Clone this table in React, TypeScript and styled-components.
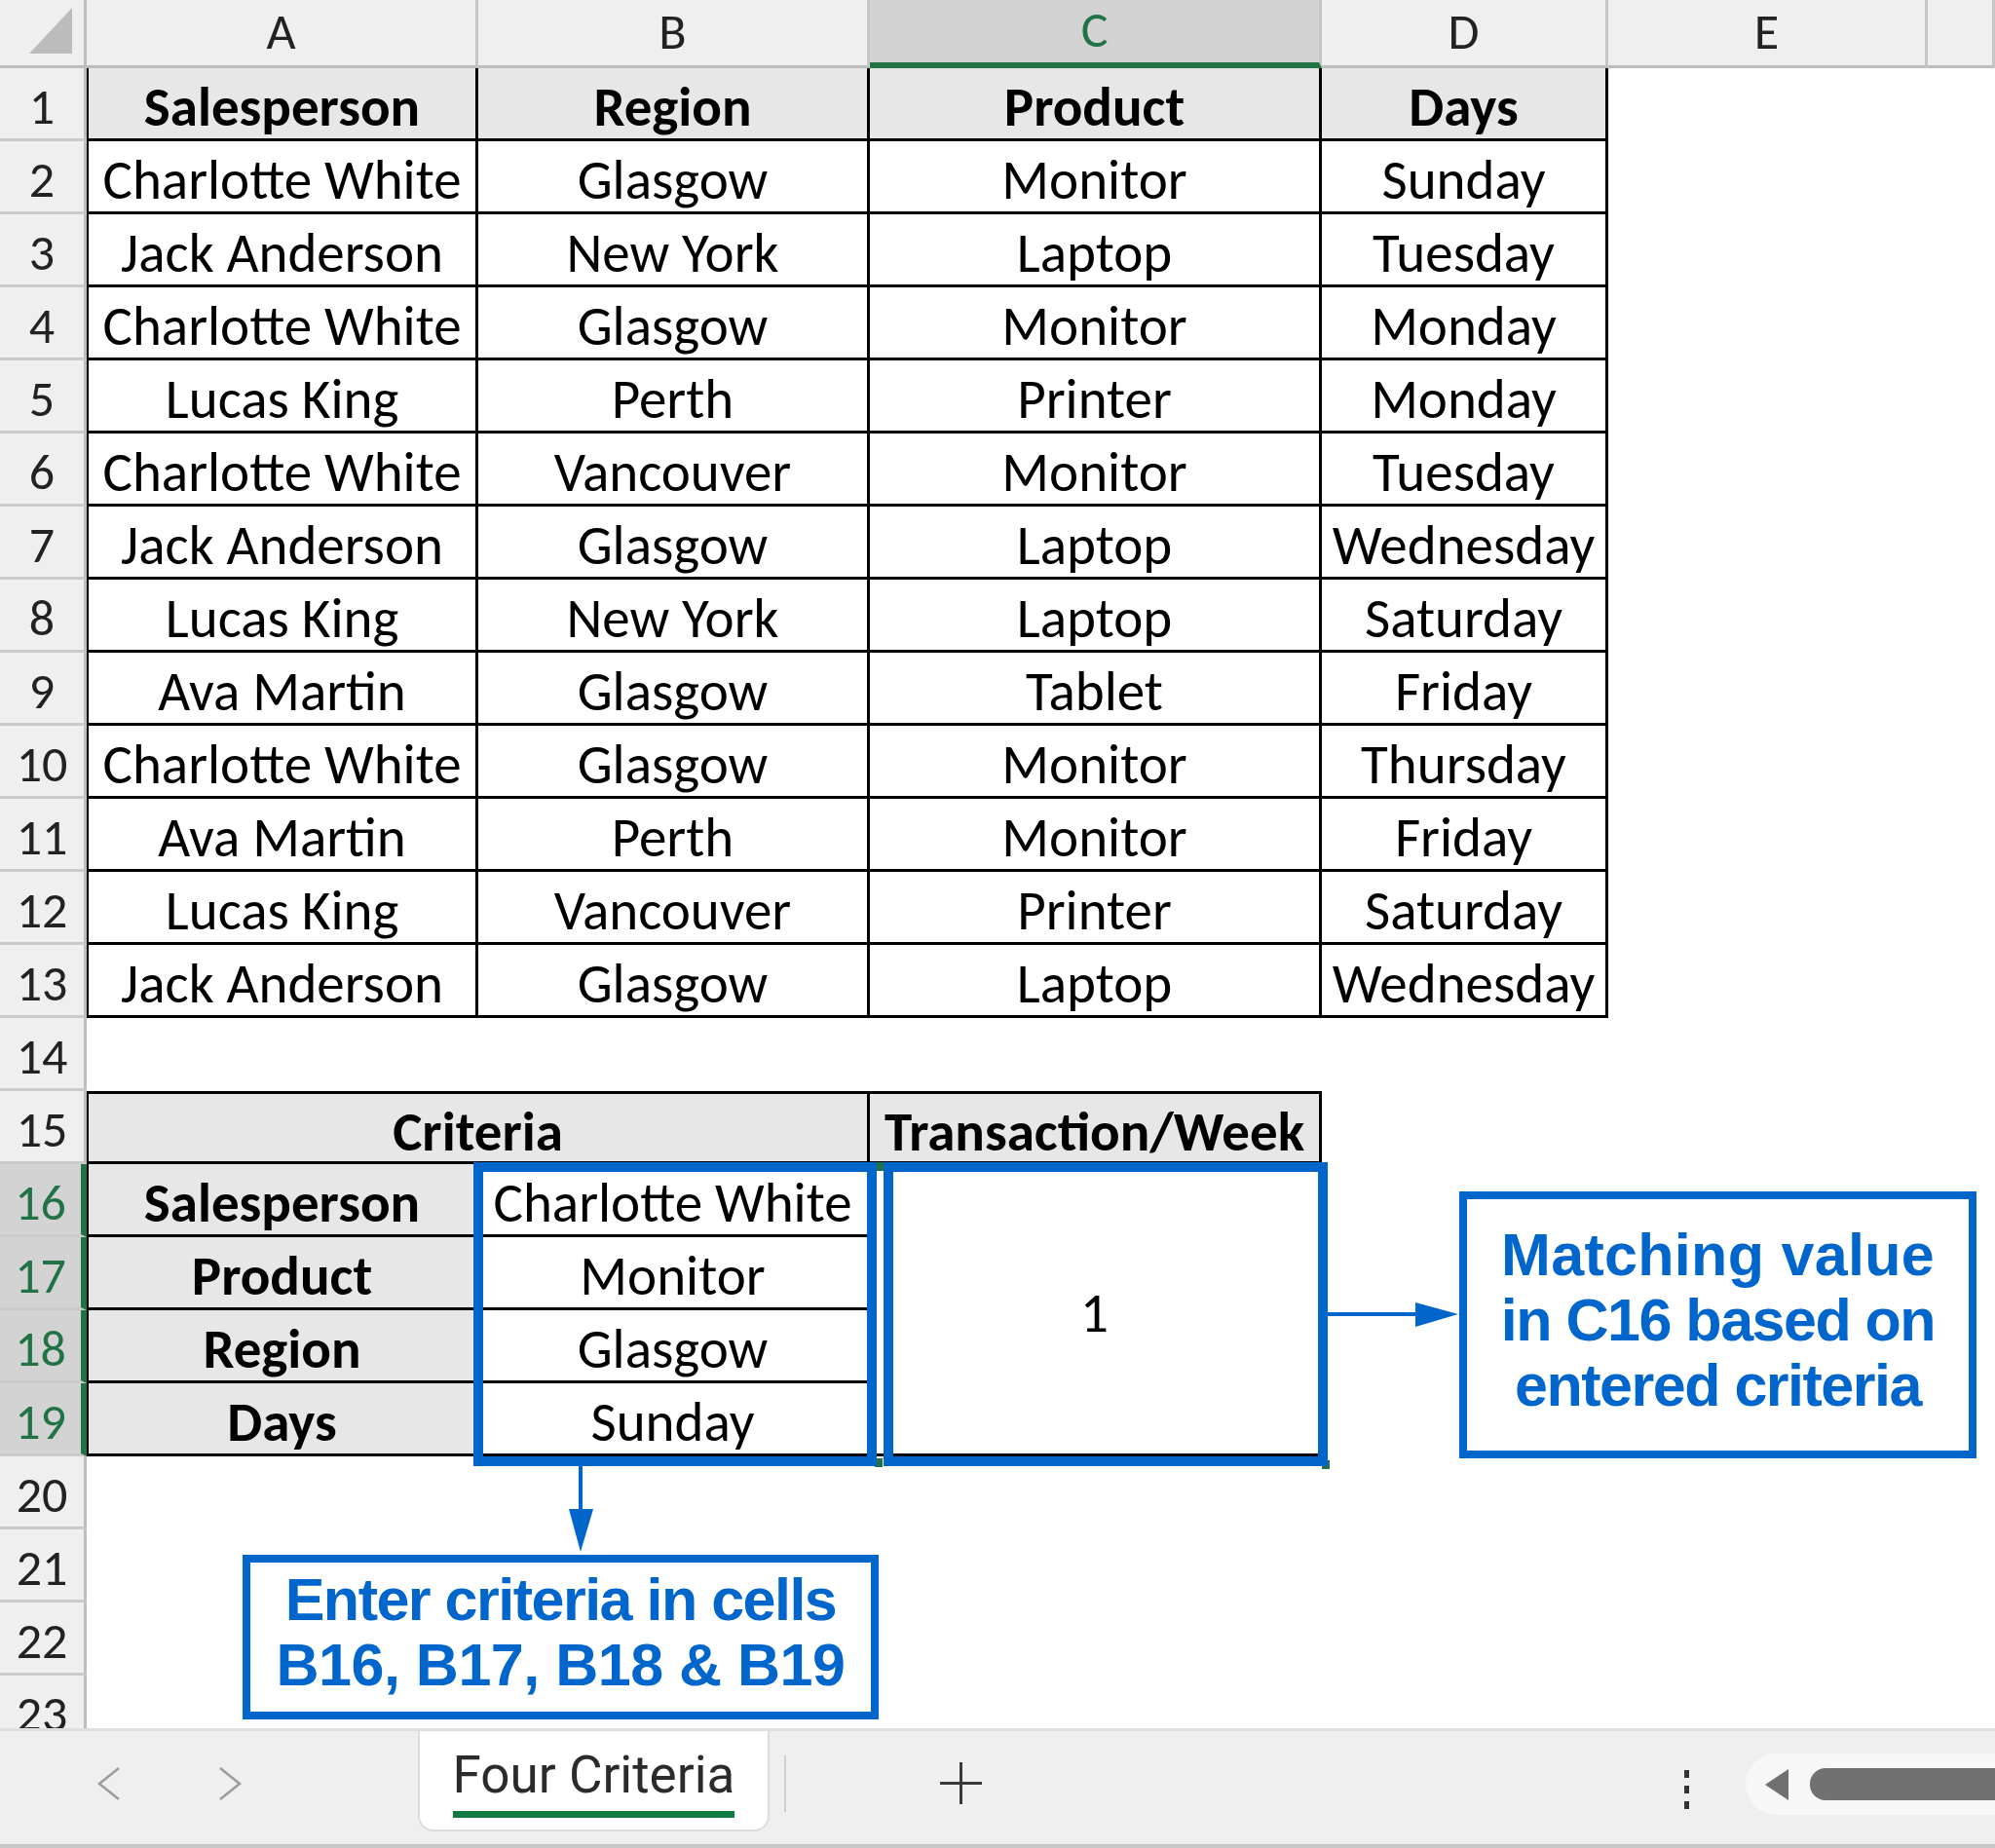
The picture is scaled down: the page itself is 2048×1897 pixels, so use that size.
import React from 'react';
import styled, { createGlobalStyle } from 'styled-components';

const CELL_FONT = `Carlito, Calibri, Lato, "Liberation Sans", sans-serif`;
const UI_FONT = `Roboto, "Liberation Sans", Arial, sans-serif`;
const NOTE_FONT = `"Liberation Sans", Arial, sans-serif`;
const BLUE = '#0066cc';
const GREEN = '#217346';

const GlobalStyle = createGlobalStyle`
  html, body { margin: 0; padding: 0; background: #fff; }
  body { width: 2048px; height: 1897px; overflow: hidden; font-family: ${CELL_FONT}; }
  * { box-sizing: border-box; }
`;

const Window = styled.div`
  width: 2048px;
  height: 1897px;
  display: flex;
  flex-direction: column;
  overflow: hidden;
`;

const SheetArea = styled.div`
  position: relative;
  flex: 1 1 auto;
  min-height: 0;
  overflow: hidden;
  background: #fff;
`;

const Grid = styled.div`
  display: grid;
  grid-template-columns: 89px 402px 402px 464px 294px 328px 1fr;
  grid-template-rows: 70px repeat(23, 75px);
  font-family: ${CELL_FONT};
`;

const Corner = styled.div`
  position: relative;
  background: #efefef;
  border-right: 3px solid #bdbdbd;
  border-bottom: 3px solid #bdbdbd;
  &::after {
    content: '';
    position: absolute;
    right: 12px;
    bottom: 12px;
    width: 44px;
    height: 47px;
    background: #bcbcbc;
    clip-path: polygon(100% 0, 100% 100%, 0 100%);
  }
`;

const ColHeader = styled.div<{ $active?: boolean }>`
  display: flex;
  align-items: center;
  justify-content: center;
  background: ${(p) => (p.$active ? '#d3d3d3' : '#efefef')};
  border-right: 3px solid #c6c6c6;
  border-bottom: ${(p) => (p.$active ? `6px solid ${GREEN}` : '3px solid #bdbdbd')};
  color: ${(p) => (p.$active ? GREEN : '#222')};
  font-size: 52px;
  line-height: 1;
  padding-bottom: 4px;
`;

const RowHeader = styled.div<{ $active?: boolean }>`
  display: flex;
  align-items: center;
  justify-content: center;
  background: ${(p) => (p.$active ? '#d3d3d3' : '#efefef')};
  border-right: ${(p) => (p.$active ? `6px solid ${GREEN}` : '3px solid #bdbdbd')};
  border-bottom: 3px solid #cacaca;
  color: ${(p) => (p.$active ? GREEN : '#222')};
  font-size: 52px;
  line-height: 1;
  padding-top: 5px;
  overflow: hidden;
`;

const TableCell = styled.div<{
  $head?: boolean;
  $top?: boolean;
  $left?: boolean;
  $span?: number;
  $rowSpan?: number;
}>`
  display: flex;
  align-items: center;
  justify-content: center;
  background: ${(p) => (p.$head ? '#e7e7e7' : '#fff')};
  font-weight: ${(p) => (p.$head ? 700 : 400)};
  color: #000;
  font-size: 57px;
  line-height: 1;
  white-space: nowrap;
  padding-top: 7px;
  border-right: 3px solid #000;
  border-bottom: 3px solid #000;
  border-top: ${(p) => (p.$top ? '3px solid #000' : 'none')};
  border-left: ${(p) => (p.$left ? '2px solid #000' : 'none')};
  grid-column: ${(p) => (p.$span ? `span ${p.$span}` : 'auto')};
  grid-row: ${(p) => (p.$rowSpan ? `span ${p.$rowSpan}` : 'auto')};
`;

const Blank = styled.div`
  background: #fff;
`;

/* ---------- overlays on the sheet ---------- */

const SelectionBox = styled.div<{ $x: number; $y: number; $w: number; $h: number }>`
  position: absolute;
  left: ${(p) => p.$x}px;
  top: ${(p) => p.$y}px;
  width: ${(p) => p.$w}px;
  height: ${(p) => p.$h}px;
  border: 10px solid ${BLUE};
  z-index: 2;
`;

const HandleDot = styled.div<{ $x: number; $y: number }>`
  position: absolute;
  left: ${(p) => p.$x}px;
  top: ${(p) => p.$y}px;
  width: 8px;
  height: 9px;
  background: ${GREEN};
  z-index: 1;
`;

const Callout = styled.div<{ $x: number; $y: number; $w: number; $h: number }>`
  position: absolute;
  left: ${(p) => p.$x}px;
  top: ${(p) => p.$y}px;
  width: ${(p) => p.$w}px;
  height: ${(p) => p.$h}px;
  border: 8px solid ${BLUE};
  background: #fff;
  display: flex;
  flex-direction: column;
  align-items: center;
  justify-content: center;
  padding-bottom: 10px;
  font-family: ${NOTE_FONT};
  font-weight: 700;
  font-size: 61px;
  line-height: 67px;
  letter-spacing: -1.5px;
  color: ${BLUE};
  text-align: center;
  white-space: nowrap;
  z-index: 3;
`;

const CalloutLine = styled.span<{ $spacing?: number }>`
  letter-spacing: ${(p) => (p.$spacing !== undefined ? `${p.$spacing}px` : 'inherit')};
`;

const ArrowSvg = styled.svg<{ $x: number; $y: number }>`
  position: absolute;
  left: ${(p) => p.$x}px;
  top: ${(p) => p.$y}px;
  z-index: 3;
  overflow: visible;
`;

/* ---------- sheet tab bar ---------- */

const TabBar = styled.footer`
  flex: 0 0 123px;
  background: #efefef;
  border-top: 3px solid #dedede;
  border-bottom: 4px solid #c8c8c8;
  display: flex;
  align-items: flex-start;
  font-family: ${UI_FONT};
  overflow: hidden;
`;

const NavGroup = styled.div`
  display: flex;
  gap: 98px;
  margin-left: 99px;
  margin-top: 36px;
`;

const SheetTab = styled.div`
  margin-left: 180px;
  margin-top: -3px;
  width: 361px;
  height: 106px;
  background: #fff;
  border: 2px solid #dcdcdc;
  border-top: none;
  border-radius: 0 0 16px 16px;
  display: flex;
  flex-direction: column;
  align-items: center;
  padding-top: 22px;
`;

const TabLabel = styled.div`
  display: flex;
  flex-direction: column;
  align-items: stretch;
  font-size: 53px;
  line-height: 52px;
  color: #2b2b2b;
  &::after {
    content: '';
    display: block;
    height: 7px;
    margin-top: 11px;
    background: #107c41;
  }
`;

const TabDivider = styled.div`
  width: 2px;
  height: 58px;
  margin-left: 15px;
  margin-top: 25px;
  background: #cfcfcf;
`;

const AddButton = styled.svg`
  margin-left: 158px;
  margin-top: 32px;
`;

const Spacer = styled.div`
  flex: 1 1 auto;
`;

const MoreButton = styled.svg`
  margin-top: 40px;
`;

const ScrollTrack = styled.div`
  flex: 0 0 256px;
  margin-left: 57px;
  margin-top: 23px;
  height: 63px;
  border-radius: 32px 0 0 32px;
  background: #f7f7f7;
  display: flex;
  align-items: center;
  padding-left: 20px;
  gap: 22px;
`;

const ScrollThumb = styled.div`
  flex: 1 1 auto;
  height: 33px;
  border-radius: 16px 0 0 16px;
  background: #717171;
`;

const tableHead = ['Salesperson', 'Region', 'Product', 'Days'];
const tableRows: string[][] = [
  ['Charlotte White', 'Glasgow', 'Monitor', 'Sunday'],
  ['Jack Anderson', 'New York', 'Laptop', 'Tuesday'],
  ['Charlotte White', 'Glasgow', 'Monitor', 'Monday'],
  ['Lucas King', 'Perth', 'Printer', 'Monday'],
  ['Charlotte White', 'Vancouver', 'Monitor', 'Tuesday'],
  ['Jack Anderson', 'Glasgow', 'Laptop', 'Wednesday'],
  ['Lucas King', 'New York', 'Laptop', 'Saturday'],
  ['Ava Martin', 'Glasgow', 'Tablet', 'Friday'],
  ['Charlotte White', 'Glasgow', 'Monitor', 'Thursday'],
  ['Ava Martin', 'Perth', 'Monitor', 'Friday'],
  ['Lucas King', 'Vancouver', 'Printer', 'Saturday'],
  ['Jack Anderson', 'Glasgow', 'Laptop', 'Wednesday'],
];
const criteria: [string, string][] = [
  ['Salesperson', 'Charlotte White'],
  ['Product', 'Monitor'],
  ['Region', 'Glasgow'],
  ['Days', 'Sunday'],
];

const columns: { label: string; active?: boolean }[] = [
  { label: 'A' },
  { label: 'B' },
  { label: 'C', active: true },
  { label: 'D' },
  { label: 'E' },
  { label: '' },
];

const blanks = (row: number, n: number) =>
  Array.from({ length: n }, (_, i) => <Blank key={`b${row}-${i}`} />);

function SheetGrid() {
  const cells: React.ReactNode[] = [<Corner key="corner" />];
  columns.forEach((c, i) =>
    cells.push(
      <ColHeader key={`col${i}`} $active={c.active}>
        {c.label}
      </ColHeader>
    )
  );
  for (let r = 1; r <= 23; r++) {
    cells.push(
      <RowHeader key={`rh${r}`} $active={r >= 16 && r <= 19}>
        {r}
      </RowHeader>
    );
    if (r === 1) {
      tableHead.forEach((t, i) =>
        cells.push(
          <TableCell key={`h${i}`} $head $left={i === 0}>
            {t}
          </TableCell>
        )
      );
      cells.push(...blanks(r, 2));
    } else if (r <= 13) {
      tableRows[r - 2].forEach((t, i) =>
        cells.push(
          <TableCell key={`d${r}-${i}`} $left={i === 0}>
            {t}
          </TableCell>
        )
      );
      cells.push(...blanks(r, 2));
    } else if (r === 15) {
      cells.push(
        <TableCell key="crit" $head $top $left $span={2}>
          Criteria
        </TableCell>,
        <TableCell key="tw" $head $top>
          Transaction/Week
        </TableCell>
      );
      cells.push(...blanks(r, 3));
    } else if (r >= 16 && r <= 19) {
      const [label, value] = criteria[r - 16];
      cells.push(
        <TableCell key={`l${r}`} $head $left>
          {label}
        </TableCell>,
        <TableCell key={`v${r}`}>{value}</TableCell>
      );
      if (r === 16) {
        cells.push(
          <TableCell key="result" $rowSpan={4}>
            1
          </TableCell>
        );
      }
      cells.push(...blanks(r, 3));
    } else {
      cells.push(...blanks(r, 6));
    }
  }
  return <Grid>{cells}</Grid>;
}

export default function App() {
  return (
    <>
      <GlobalStyle />
      <Window>
        <SheetArea>
          <SheetGrid />
          <HandleDot $x={899} $y={1193} />
          <HandleDot $x={898} $y={1497} />
          <HandleDot $x={1357} $y={1499} />
          <SelectionBox $x={486} $y={1193} $w={414} $h={312} />
          <SelectionBox $x={907} $y={1193} $w={456} $h={312} />

          <ArrowSvg $x={1363} $y={1330} width={136} height={40} viewBox="0 0 136 40">
            <line x1="0" y1="19" x2="96" y2="19" stroke={BLUE} strokeWidth="4" />
            <polygon points="90,7 134,19 90,32" fill={BLUE} />
          </ArrowSvg>
          <ArrowSvg $x={580} $y={1505} width={32} height={90} viewBox="0 0 32 90">
            <line x1="16" y1="0" x2="16" y2="50" stroke={BLUE} strokeWidth="4" />
            <polygon points="4,44 16,88 29,44" fill={BLUE} />
          </ArrowSvg>

          <Callout $x={1498} $y={1223} $w={531} $h={274}>
            <CalloutLine $spacing={0.3}>Matching value</CalloutLine>
            <CalloutLine>in C16 based on</CalloutLine>
            <CalloutLine>entered criteria</CalloutLine>
          </Callout>
          <Callout $x={249} $y={1596} $w={653} $h={169}>
            <CalloutLine>Enter criteria in cells</CalloutLine>
            <CalloutLine $spacing={-0.5}>B16, B17, B18 &amp; B19</CalloutLine>
          </Callout>
        </SheetArea>

        <TabBar>
          <NavGroup>
            <svg width="26" height="36" viewBox="0 0 26 36">
              <polyline points="23,2 3,18 23,34" fill="none" stroke="#9c9c9c" strokeWidth="2.5" />
            </svg>
            <svg width="26" height="36" viewBox="0 0 26 36">
              <polyline points="3,2 23,18 3,34" fill="none" stroke="#9c9c9c" strokeWidth="2.5" />
            </svg>
          </NavGroup>
          <SheetTab>
            <TabLabel>Four Criteria</TabLabel>
          </SheetTab>
          <TabDivider />
          <AddButton width="43" height="43" viewBox="0 0 43 43">
            <line x1="21.5" y1="0" x2="21.5" y2="43" stroke="#3a3a3a" strokeWidth="3" />
            <line x1="0" y1="21.5" x2="43" y2="21.5" stroke="#3a3a3a" strokeWidth="3" />
          </AddButton>
          <Spacer />
          <MoreButton width="6" height="40" viewBox="0 0 6 40">
            <rect x="0" y="0" width="5" height="8" fill="#333" />
            <rect x="0" y="16" width="5" height="8" fill="#333" />
            <rect x="0" y="32" width="5" height="8" fill="#333" />
          </MoreButton>
          <ScrollTrack>
            <svg width="24" height="32" viewBox="0 0 24 32">
              <polygon points="24,0 24,32 0,16" fill="#707070" />
            </svg>
            <ScrollThumb />
          </ScrollTrack>
        </TabBar>
      </Window>
    </>
  );
}
